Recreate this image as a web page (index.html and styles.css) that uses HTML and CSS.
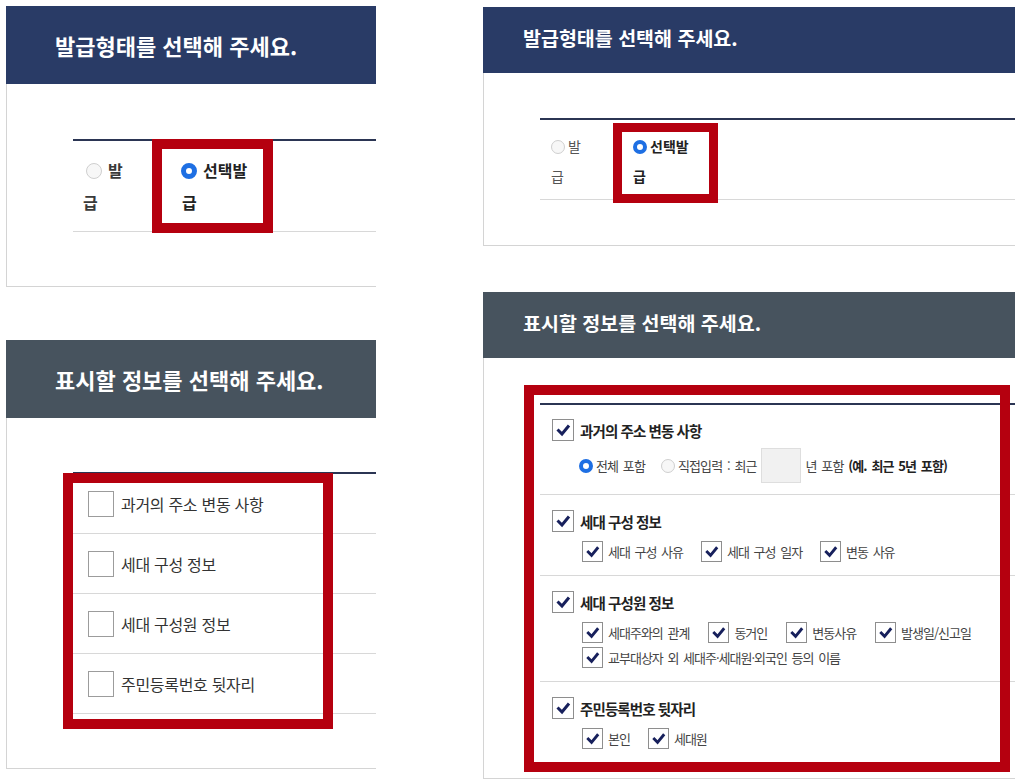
FILE: index.html
```html
<!DOCTYPE html>
<html lang="ko">
<head>
<meta charset="utf-8">
<title>발급형태 / 표시할 정보 선택</title>
<link rel="stylesheet" href="styles.css">
</head>
<body>
<div class="page">
  <div class="col col-left">
    <section class="panel">
      <header class="head head-lg navy">발급형태를 선택해 주세요.</header>
      <div class="body body-tl">
        <div class="table">
          <div class="row row-tl">
            <label class="opt opt-tl-1"><span class="radio radio-lg"></span>발급</label>
            <label class="opt opt-tl-2"><span class="radio radio-lg on"></span>선택발급</label>
          </div>
        </div>
        <div class="mark mark-tl"></div>
      </div>
    </section>

    <section class="panel panel-next-left">
      <header class="head head-lg slate">표시할 정보를 선택해 주세요.</header>
      <div class="body body-bl">
        <ul class="table plain-list">
          <li class="row row-bl"><span class="box-empty"></span>과거의 주소 변동 사항</li>
          <li class="row row-bl"><span class="box-empty"></span>세대 구성 정보</li>
          <li class="row row-bl"><span class="box-empty"></span>세대 구성원 정보</li>
          <li class="row row-bl"><span class="box-empty"></span>주민등록번호 뒷자리</li>
        </ul>
        <div class="mark mark-bl"></div>
      </div>
    </section>
  </div>

  <div class="col col-right">
    <section class="panel">
      <header class="head head-sm navy">발급형태를 선택해 주세요.</header>
      <div class="body body-tr">
        <div class="table">
          <div class="row row-tr">
            <label class="opt opt-tr-1"><span class="radio radio-sm"></span>발급</label>
            <label class="opt opt-tr-2"><span class="radio radio-sm on"></span>선택발급</label>
          </div>
        </div>
        <div class="mark mark-tr"></div>
      </div>
    </section>

    <section class="panel panel-next-right">
      <header class="head head-sm slate">표시할 정보를 선택해 주세요.</header>
      <div class="body body-br">
        <div class="table">
          <div class="row sec sec-first">
            <div class="main"><span class="cb cb-main"><svg viewBox="0 0 20 20"><path d="M4.5 9.5 9 14 16 5.5"/></svg></span>과거의 주소 변동 사항</div>
            <div class="radio-row">
              <span class="radio radio-sm on"></span><span class="rtext">전체 포함</span>
              <span class="radio radio-sm second"></span><span class="rtext">직접입력 : 최근</span>
              <span class="year-input"></span>
              <span class="rtext">년 포함 <b>(예. 최근 5년 포함)</b></span>
            </div>
          </div>
          <div class="row sec">
            <div class="main"><span class="cb cb-main"><svg viewBox="0 0 20 20"><path d="M4.5 9.5 9 14 16 5.5"/></svg></span>세대 구성 정보</div>
            <div class="subs">
              <div class="sub-row">
                <span class="item"><span class="cb"><svg viewBox="0 0 20 20"><path d="M4.5 9.5 9 14 16 5.5"/></svg></span>세대 구성 사유</span>
                <span class="item"><span class="cb"><svg viewBox="0 0 20 20"><path d="M4.5 9.5 9 14 16 5.5"/></svg></span>세대 구성 일자</span>
                <span class="item"><span class="cb"><svg viewBox="0 0 20 20"><path d="M4.5 9.5 9 14 16 5.5"/></svg></span>변동 사유</span>
              </div>
            </div>
          </div>
          <div class="row sec">
            <div class="main"><span class="cb cb-main"><svg viewBox="0 0 20 20"><path d="M4.5 9.5 9 14 16 5.5"/></svg></span>세대 구성원 정보</div>
            <div class="subs">
              <div class="sub-row sub-row-wide">
                <span class="item"><span class="cb"><svg viewBox="0 0 20 20"><path d="M4.5 9.5 9 14 16 5.5"/></svg></span>세대주와의 관계</span>
                <span class="item"><span class="cb"><svg viewBox="0 0 20 20"><path d="M4.5 9.5 9 14 16 5.5"/></svg></span>동거인</span>
                <span class="item"><span class="cb"><svg viewBox="0 0 20 20"><path d="M4.5 9.5 9 14 16 5.5"/></svg></span>변동사유</span>
                <span class="item"><span class="cb"><svg viewBox="0 0 20 20"><path d="M4.5 9.5 9 14 16 5.5"/></svg></span>발생일/신고일</span>
              </div>
              <div class="sub-row">
                <span class="item"><span class="cb"><svg viewBox="0 0 20 20"><path d="M4.5 9.5 9 14 16 5.5"/></svg></span>교부대상자 외 세대주·세대원·외국인 등의 이름</span>
              </div>
            </div>
          </div>
          <div class="row sec sec-last">
            <div class="main"><span class="cb cb-main"><svg viewBox="0 0 20 20"><path d="M4.5 9.5 9 14 16 5.5"/></svg></span>주민등록번호 뒷자리</div>
            <div class="subs">
              <div class="sub-row">
                <span class="item"><span class="cb"><svg viewBox="0 0 20 20"><path d="M4.5 9.5 9 14 16 5.5"/></svg></span>본인</span>
                <span class="item"><span class="cb"><svg viewBox="0 0 20 20"><path d="M4.5 9.5 9 14 16 5.5"/></svg></span>세대원</span>
              </div>
            </div>
          </div>
        </div>
        <div class="mark mark-br"></div>
      </div>
    </section>
  </div>
</div>
</body>
</html>
```

FILE: styles.css
```css
* { box-sizing: border-box; }

body {
  margin: 0;
  background: #fff;
  font-family: "Noto Sans CJK KR", "Noto Sans", sans-serif;
  color: #333;
}

.page {
  display: flex;
  align-items: flex-start;
  padding: 6px 0 0 6px;
}

.col { display: flex; flex-direction: column; }
.col-left { width: 370px; }
.col-right { width: 532px; margin-left: 107px; margin-top: 1px; }

.panel { overflow: hidden; }
.panel-next-left { margin-top: 53px; }
.panel-next-right { margin-top: 46px; }

/* headers */
.head {
  display: flex;
  align-items: center;
  color: #fff;
  font-weight: 700;
  white-space: nowrap;
}
.head-lg { height: 78px; padding-left: 49px; font-size: 22px; }
.head-sm { height: 66px; padding-left: 40px; padding-bottom: 5px; font-size: 19.5px; }
.navy { background: #293b66; }
.slate { background: #47535e; }

/* bodies */
.body {
  position: relative;
  border-left: 1px solid #d4d4d4;
  border-bottom: 1px solid #d4d4d4;
}
.body-tl { padding: 55px 0 54px 66px; }
.body-bl { padding: 54px 0 54px 66px; }
.body-tr { padding: 45px 0 45px 56px; }
.body-br { padding: 45px 0 16px 56px; }

.table { border-top: 2px solid #2b3553; }
.row { border-bottom: 1px solid #d8d8d8; }

.plain-list { list-style: none; margin: 0; padding: 0; }

/* radios */
.radio {
  display: inline-block;
  border-radius: 50%;
  border: 1px solid #cfcfcf;
  background: #f7f7f7;
  flex: none;
}
.radio.on { border-color: #1e6fe3; background: #fff; }
.radio-lg { width: 16px; height: 16px; margin: 0 6px 0 3px; vertical-align: -2px; }
.radio-lg.on { border-width: 5px; margin-left: -1px; }
.radio-sm { width: 14px; height: 14px; margin-right: 3px; vertical-align: -2px; }
.radio-sm.on { border-width: 4.5px; }

/* top-left row */
.row-tl {
  display: flex;
  gap: 54px;
  padding: 13px 0 13px 10px;
  font-size: 16px;
  line-height: 32px;
  font-weight: 700;
}
.opt-tl-1 { width: 45px; color: #3a3a3a; }
.opt-tl-2 { width: 75px; color: #222; }

/* top-right row */
.row-tr {
  display: flex;
  gap: 42px;
  padding: 11px 0 8px 11px;
  font-size: 14px;
  line-height: 30px;
}
.opt-tr-1 { width: 40px; color: #555; }
.opt-tr-2 { width: 65px; color: #222; font-weight: 700; }

/* bottom-left list */
.row-bl {
  display: flex;
  align-items: center;
  height: 60px;
  padding-left: 15px;
  gap: 7px;
  font-size: 16px;
  letter-spacing: -0.3px;
  color: #333;
}
.box-empty {
  width: 26px;
  height: 26px;
  border: 1px solid #9c9c9c;
  background: #fff;
  flex: none;
}

/* bottom-right sections */
.sec { padding: 15px 0 13px 12px; }
.sec-first { padding: 14px 0 11px 12px; }
.sec-last { border-bottom: none; }

.main {
  display: flex;
  align-items: center;
  gap: 6px;
  height: 22px;
  font-size: 14.5px;
  font-weight: 700;
  letter-spacing: -0.9px;
  color: #222;
}

.cb {
  display: inline-flex;
  width: 21px;
  height: 21px;
  border: 1px solid #8e8e8e;
  background: #fff;
  flex: none;
}
.cb-main { width: 22px; height: 22px; }
.cb svg { width: 100%; height: 100%; }
.cb path {
  fill: none;
  stroke: #17205c;
  stroke-width: 3;
  stroke-linejoin: miter;
}

.subs {
  display: flex;
  flex-direction: column;
  gap: 4px;
  margin-top: 9px;
  padding-left: 30px;
}
.sub-row { display: flex; column-gap: 18px; }
.sub-row-wide { column-gap: 19px; }
.item {
  display: flex;
  align-items: center;
  gap: 5px;
  height: 21px;
  font-size: 13px;
  letter-spacing: -1px;
  word-spacing: 2px;
  color: #444;
  white-space: nowrap;
}

.radio-row {
  display: flex;
  align-items: center;
  height: 35px;
  margin-top: 7px;
  padding-left: 27px;
  font-size: 13px;
  letter-spacing: -0.9px;
  word-spacing: 2px;
  color: #444;
  white-space: nowrap;
}
.radio-row .radio { vertical-align: middle; }
.radio-row .second { margin-left: 16px; }
.rtext b { color: #222; font-weight: 700; }
.year-input {
  width: 40px;
  height: 35px;
  margin: 0 5px 0 4px;
  background: #f1f1f1;
  border: 1px solid #dedede;
  flex: none;
}

/* red annotation frames over the content */
.mark {
  position: absolute;
  border: 10px solid #b5000f;
  pointer-events: none;
}
.mark-tl { left: 145px; top: 55px; width: 121px; height: 94px; }
.mark-bl { left: 56px; top: 55px; width: 270px; height: 256px; }
.mark-tr { left: 129px; top: 50px; width: 105px; height: 80px; border-width: 9px; }
.mark-br { left: 40px; top: 27px; width: 486px; height: 387px; }
```
